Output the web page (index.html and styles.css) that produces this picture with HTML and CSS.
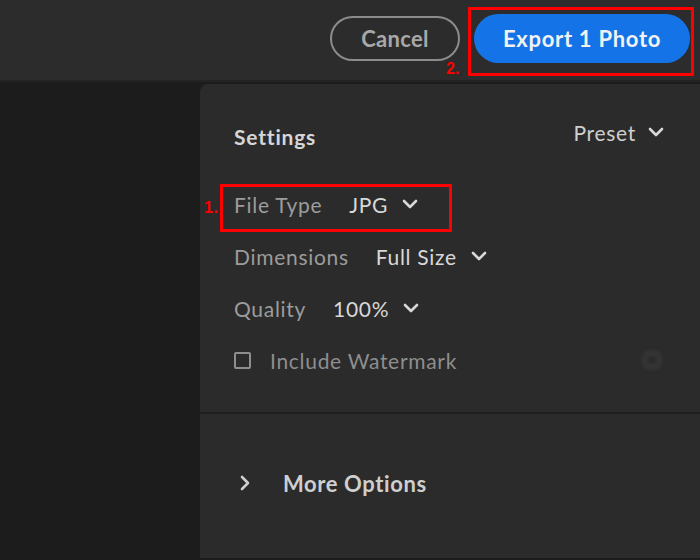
FILE: index.html
```html
<!DOCTYPE html>
<html>
<head>
<meta charset="utf-8">
<link rel="stylesheet" href="styles.css">
</head>
<body>
<div class="topbar">
  <button class="btn-cancel">Cancel</button>
  <div class="annot annot-export">
    <button class="btn-export">Export 1 Photo</button>
    <span class="annot-box box-export"></span>
    <span class="annot-num num-export">2.</span>
  </div>
</div>
<div class="main">
  <div class="canvas"></div>
  <div class="panel">
    <section class="settings">
      <div class="head">
        <span class="title">Settings</span>
        <span class="preset">Preset
          <svg class="chev" viewBox="0 0 16 10" width="16" height="10"><path d="M2 2l6 6 6-6" fill="none" stroke="currentColor" stroke-width="2.6" stroke-linecap="round" stroke-linejoin="round"/></svg>
        </span>
      </div>
      <div class="row annot">
        <span class="label">File Type</span>
        <span class="value">JPG
          <svg class="chev" viewBox="0 0 16 10" width="16" height="10"><path d="M2 2l6 6 6-6" fill="none" stroke="currentColor" stroke-width="2.6" stroke-linecap="round" stroke-linejoin="round"/></svg>
        </span>
        <span class="annot-box box-filetype"></span>
        <span class="annot-num num-filetype">1.</span>
      </div>
      <div class="row">
        <span class="label">Dimensions</span>
        <span class="value">Full Size
          <svg class="chev" viewBox="0 0 16 10" width="16" height="10"><path d="M2 2l6 6 6-6" fill="none" stroke="currentColor" stroke-width="2.6" stroke-linecap="round" stroke-linejoin="round"/></svg>
        </span>
      </div>
      <div class="row">
        <span class="label">Quality</span>
        <span class="value">100%
          <svg class="chev" viewBox="0 0 16 10" width="16" height="10"><path d="M2 2l6 6 6-6" fill="none" stroke="currentColor" stroke-width="2.6" stroke-linecap="round" stroke-linejoin="round"/></svg>
        </span>
      </div>
      <div class="row watermark">
        <span class="checkbox"></span>
        <span class="wm-label">Include Watermark</span>
        <span class="wm-icon"></span>
      </div>
    </section>
    <section class="more">
      <svg class="chev-right" viewBox="0 0 10 16" width="10" height="16"><path d="M2 2l6 6-6 6" fill="none" stroke="currentColor" stroke-width="2.6" stroke-linecap="round" stroke-linejoin="round"/></svg>
      <span class="more-label">More Options</span>
    </section>
  </div>
</div>
</body>
</html>
```
FILE: styles.css
```css
* { box-sizing: border-box; }
html, body { margin: 0; padding: 0; }
body {
  width: 700px;
  height: 560px;
  overflow: hidden;
  background: #1c1c1c;
  font-family: Lato, "Noto Sans", sans-serif;
}
.topbar {
  height: 82px;
  background: #2c2c2c;
  display: flex;
  justify-content: flex-end;
  align-items: center;
  padding: 0 10px 4px 0;
  gap: 14px;
  border-bottom: 2px solid #232323;
}
.btn-cancel {
  width: 130px;
  height: 45px;
  border: 2px solid #8c8c8c;
  border-radius: 23px;
  background: transparent;
  color: #a8a8a8;
  font-family: inherit;
  font-size: 22px;
  font-weight: 700;
  letter-spacing: 0.3px;
  padding: 0;
}
.btn-export {
  width: 216px;
  height: 49px;
  border: none;
  border-radius: 25px;
  background: #1473e6;
  color: #f2f2f2;
  font-family: inherit;
  font-size: 22px;
  font-weight: 700;
  letter-spacing: 0.7px;
  padding: 0;
  display: block;
}
.annot { position: relative; }
.annot-box {
  position: absolute;
  border: 3px solid #ff0000;
  pointer-events: none;
}
.annot-num {
  position: absolute;
  color: #ff0000;
  font-family: "Liberation Sans", Arial, sans-serif;
  font-weight: 700;
  font-size: 16px;
  line-height: 16px;
}
.box-export { top: -7px; bottom: -13px; left: -6px; right: -4px; }
.num-export { left: -28px; bottom: -14px; }
.main {
  display: flex;
  height: 476px;
  padding-top: 2px;
}
.canvas { width: 200px; }
.panel {
  flex: 1;
  background: #2b2b2b;
  border-top-left-radius: 8px;
}
.settings {
  padding: 30px 36px 26px 34px;
  border-bottom: 2px solid #1f1f1f;
}
.head {
  height: 42px;
  display: flex;
  align-items: center;
  justify-content: space-between;
  margin-bottom: 22px;
}
.title {
  color: #d6d6d6;
  font-size: 21px;
  font-weight: 700;
  letter-spacing: 0.8px;
  margin-top: 2px;
}
.preset {
  color: #cfcfcf;
  font-size: 21px;
  letter-spacing: 0.7px;
  display: flex;
  align-items: center;
  gap: 12px;
  margin-top: -6px;
}
.row {
  height: 52px;
  display: flex;
  align-items: center;
  font-size: 21px;
  letter-spacing: 0.7px;
}
.label { color: #9c9c9c; margin-right: 27px; }
.value {
  color: #d8d8d8;
  display: flex;
  align-items: center;
  gap: 14px;
}
.chev { color: #d8d8d8; display: block; }
.box-filetype { top: 6px; bottom: -2px; left: -14px; width: 232px; }
.num-filetype { left: -30px; top: 22px; }
.watermark { position: relative; }
.checkbox {
  width: 17px;
  height: 17px;
  border: 2px solid #8e8e8e;
  border-radius: 2px;
  margin-right: 19px;
}
.wm-label { color: #8e8e8e; }
.wm-icon {
  margin-left: auto;
  width: 24px;
  height: 24px;
  border-radius: 50%;
  background: radial-gradient(circle, #2c2c2c 0 3px, #333333 5px 9px, rgba(43,43,43,0) 12px);
}
.more {
  display: flex;
  align-items: center;
  height: 52px;
  margin-top: 43px;
  padding-left: 40px;
}
.chev-right { color: #cfcfcf; display: block; }
.more-label {
  color: #cfcfcf;
  font-size: 22px;
  font-weight: 700;
  letter-spacing: 0.6px;
  margin-left: 33px;
}
```
